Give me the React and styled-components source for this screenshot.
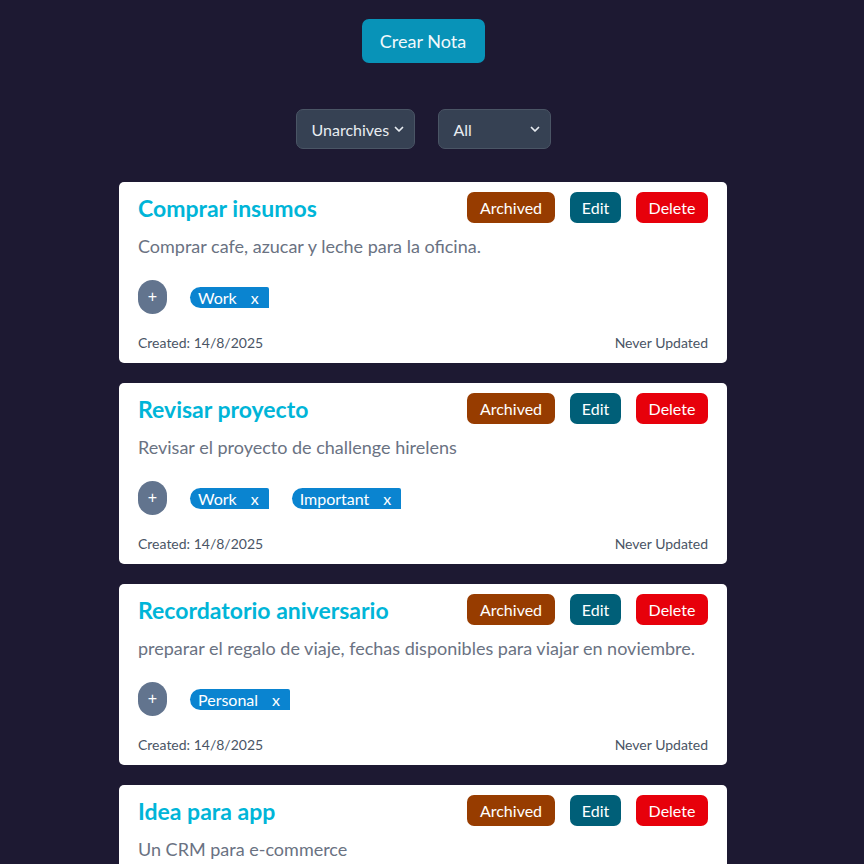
import React from "react";
import styled, { createGlobalStyle } from "styled-components";

const Global = createGlobalStyle`
  html, body { margin: 0; padding: 0; background: #1d1932; }
  body { font-family: "Lato", "Noto Sans", sans-serif; }
  * { box-sizing: border-box; }
`;

const Page = styled.div`
  display: flex;
  flex-direction: column;
  align-items: center;
  padding: 19px 18px 40px 0;
`;

const CreateButton = styled.button`
  width: 123px;
  height: 44px;
  border: none;
  border-radius: 7px;
  background: #0893b8;
  color: #f1f9fc;
  font-family: inherit;
  font-size: 18px;
`;

const Filters = styled.div`
  display: flex;
  gap: 23px;
  margin-top: 46px;
`;

const SelectBox = styled.div`
  display: flex;
  align-items: center;
  justify-content: space-between;
  width: ${(p) => p.$w}px;
  height: 40px;
  padding: 0 9px 0 15px;
  border: 1px solid #4a5565;
  border-radius: 7px;
  background: #364153;
  color: #e8ecf1;
  font-size: 16px;
`;

const List = styled.div`
  display: flex;
  flex-direction: column;
  gap: 20px;
  margin-top: 33px;
  width: 608px;
`;

const Card = styled.div`
  background: #fff;
  border-radius: 5px;
  padding: 10px 19px 10px 19px;
`;

const Header = styled.div`
  display: flex;
  align-items: center;
  justify-content: space-between;
  height: 31px;
`;

const Title = styled.h2`
  margin: 0;
  font-size: 23px;
  font-weight: 700;
  color: #00b5d8;
`;

const Actions = styled.div`
  display: flex;
  gap: 15px;
`;

const ActionButton = styled.button`
  height: 31px;
  width: ${(p) => p.$w}px;
  border: none;
  border-radius: 7px;
  background: ${(p) => p.$bg};
  color: #fff;
  font-family: inherit;
  font-size: 16px;
  padding: 0;
`;

const Description = styled.p`
  margin: 10px 0 0;
  font-size: 18px;
  line-height: 27px;
  color: #6a7282;
  white-space: nowrap;
`;

const TagRow = styled.div`
  display: flex;
  align-items: center;
  gap: 23px;
  margin-top: 20px;
  height: 34px;
`;

const PlusButton = styled.button`
  width: 29px;
  height: 34px;
  border: none;
  border-radius: 15px;
  background: #62748e;
  color: #fff;
  font-size: 16px;
  padding: 0;
`;

const Tag = styled.span`
  display: flex;
  align-items: center;
  gap: 14px;
  height: 21px;
  padding: 0 10px 0 8px;
  border-radius: 11px 2px 0 11px;
  background: #0a84d0;
  color: #fff;
  font-size: 16px;
`;

const Footer = styled.div`
  display: flex;
  justify-content: space-between;
  margin-top: 19px;
  font-size: 14px;
  line-height: 20px;
  color: #4a5565;
`;

const Chevron = () => (
  <svg width="12" height="12" viewBox="0 0 24 24" fill="none" stroke="currentColor" strokeWidth="3.5" strokeLinecap="round" strokeLinejoin="round">
    <path d="M5 9l7 7 7-7" />
  </svg>
);

const notes = [
  { title: "Comprar insumos", desc: "Comprar cafe, azucar y leche para la oficina.", tags: ["Work"] },
  { title: "Revisar proyecto", desc: "Revisar el proyecto de challenge hirelens", tags: ["Work", "Important"] },
  { title: "Recordatorio aniversario", desc: "preparar el regalo de viaje, fechas disponibles para viajar en noviembre.", tags: ["Personal"] },
  { title: "Idea para app", desc: "Un CRM para e-commerce", tags: ["Idea"] },
];

export default function App() {
  return (
    <>
      <Global />
      <Page>
        <CreateButton>Crear Nota</CreateButton>
        <Filters>
          <SelectBox $w={119}>
            <span>Unarchives</span>
            <Chevron />
          </SelectBox>
          <SelectBox $w={113}>
            <span>All</span>
            <Chevron />
          </SelectBox>
        </Filters>
        <List>
          {notes.map((n) => (
            <Card key={n.title}>
              <Header>
                <Title>{n.title}</Title>
                <Actions>
                  <ActionButton $w={88} $bg="#973c00">Archived</ActionButton>
                  <ActionButton $w={51} $bg="#005f78">Edit</ActionButton>
                  <ActionButton $w={72} $bg="#e7000b">Delete</ActionButton>
                </Actions>
              </Header>
              <Description>{n.desc}</Description>
              <TagRow>
                <PlusButton>+</PlusButton>
                {n.tags.map((t) => (
                  <Tag key={t}>
                    <span>{t}</span>
                    <span>x</span>
                  </Tag>
                ))}
              </TagRow>
              <Footer>
                <span>Created: 14/8/2025</span>
                <span>Never Updated</span>
              </Footer>
            </Card>
          ))}
        </List>
      </Page>
    </>
  );
}
